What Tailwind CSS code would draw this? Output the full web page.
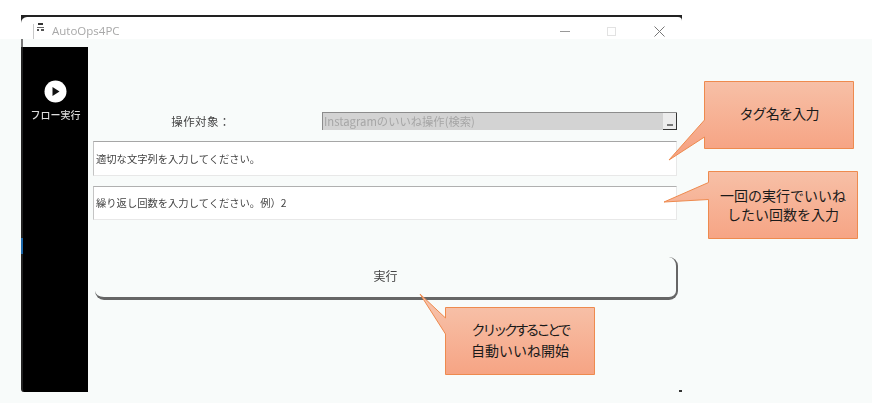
<!DOCTYPE html>
<html lang="ja">
<head>
  <meta charset="UTF-8" />
  <title>AutoOps4PC</title>
  <script src="https://cdn.jsdelivr.net/npm/@tailwindcss/browser@4"></script>
</head>
<body class="relative w-[872px] h-[403px] overflow-hidden bg-[#f8fbfa] font-['Noto_Sans_CJK_JP','Noto_Sans',sans-serif]">
  <!-- title bar band -->
  <div class="h-[39px] bg-white pt-[15px] pl-[21px]">
    <div class="w-[661px] h-[24px] bg-[#222] pt-[2px]">
      <div class="h-[22px] bg-white rounded-tl-[6px] rounded-tr-[4px] flex items-center pl-[12px] pt-[6px] text-[#a8a8a8] blur-[0.3px]">
        <div class="w-[1px] h-[15px] bg-[#c8c8c8]"></div>
        <svg width="8" height="13" viewBox="0 0 8 13" class="ml-[3px] -mt-[3px]">
          <rect x="1" y="0" width="5" height="2" fill="#333" />
          <rect x="0" y="4" width="7" height="1" fill="#666" />
          <rect x="0" y="6" width="2" height="2" fill="#555" />
          <rect x="4" y="6" width="3" height="2" fill="#555" />
        </svg>
        <span class="ml-[7px] text-[11.5px] leading-none font-['Open_Sans',sans-serif]">AutoOps4PC</span>
        <div class="ml-auto flex items-center pr-[17px]">
          <div class="w-[10px] h-[1px] bg-[#999]"></div>
          <div class="w-[9px] h-[9px] ml-[37px] border border-[#e2e2e2]"></div>
          <svg width="11" height="11" viewBox="0 0 11 11" class="ml-[38px]"><path d="M0.5 0.5L10.5 10.5M10.5 0.5L0.5 10.5" stroke="#777" stroke-width="1" fill="none" /></svg>
        </div>
      </div>
    </div>
  </div>

  <!-- window body -->
  <div class="ml-[21px] w-[661px] h-[353px] flex">
    <aside class="mt-[8px] w-[67px] h-[345px] bg-black border-l-[2px] border-[#222] rounded-bl-[3px] flex flex-col items-center pt-[33px] text-white">
      <svg width="23" height="23" viewBox="0 0 23 23">
        <circle cx="11.5" cy="11.5" r="11" fill="#fff" />
        <path d="M8.5 7L15.5 11.5L8.5 16Z" fill="#111" />
      </svg>
      <span class="mt-[5px] text-[10px] leading-[14px] font-medium text-[#ddd] whitespace-nowrap blur-[0.3px]">フロー実行</span>
    </aside>

    <main class="w-[594px] pl-[5px] pt-[73px] text-[#444] blur-[0.35px]">
      <div class="flex items-center h-[18px]">
        <span class="w-[216px] pt-[1px] text-center text-[11.5px] tracking-[0.4px]">操作対象：</span>
        <div class="ml-[13px] w-[355px] h-[18px] bg-[#d3d3d3] border-t border-l border-[#8c8c8c] flex items-center">
          <span class="pl-[1px] text-[11.3px] leading-none text-[#a6a6a6]">Instagramのいいね操作(検索)</span>
          <div class="ml-auto w-[14px] h-[17px] bg-[#ececec] border-r border-b border-[#333] flex items-end justify-center pb-[3px]">
            <div class="w-[6px] h-[2px] bg-[#777]"></div>
          </div>
        </div>
      </div>

      <div class="mt-[11px] w-[584px] h-[35px] bg-white border-t border-l border-t-[#a6a6a6] border-l-[#c4c4c4] border-r border-b border-r-[#e8e8e8] border-b-[#e8e8e8] flex items-center pl-[2px] text-[10.3px]">
        適切な文字列を入力してください。
      </div>
      <div class="mt-[10px] w-[584px] h-[34px] bg-white border-t border-l border-t-[#b0b0b0] border-l-[#c4c4c4] border-r border-b border-r-[#e8e8e8] border-b-[#e8e8e8] flex items-center pl-[2px] pb-[1px] text-[10.3px]">
        繰り返し回数を入力してください。例）2
      </div>

      <button class="mt-[37px] ml-[2px] w-[583px] h-[43px] rounded-[9px] border-b-[3px] border-r-[2px] border-[#666] flex items-center justify-center pb-[3px] text-[12px] text-[#444]">
        実行
      </button>
    </main>
  </div>

  <!-- small window corner and edge bits -->
  <div class="absolute left-[679px] top-[390px] w-[3px] h-[2px] bg-[#333]"></div>
  <div class="absolute left-[21px] top-[39px] w-[2px] h-[8px] bg-[#777]"></div>
  <div class="absolute left-[21px] top-[238px] w-[2px] h-[16px] bg-[#1a66a8]"></div>

  <!-- callouts -->
  <svg class="absolute left-0 top-0" width="872" height="403" viewBox="0 0 872 403">
    <defs>
      <linearGradient id="c1" gradientUnits="userSpaceOnUse" x1="0" y1="81" x2="0" y2="149"><stop offset="0" stop-color="#f7c0a7" /><stop offset="1" stop-color="#f6a484" /></linearGradient>
      <linearGradient id="c2" gradientUnits="userSpaceOnUse" x1="0" y1="171" x2="0" y2="239"><stop offset="0" stop-color="#f7c0a7" /><stop offset="1" stop-color="#f6a484" /></linearGradient>
      <linearGradient id="c3" gradientUnits="userSpaceOnUse" x1="0" y1="307" x2="0" y2="374"><stop offset="0" stop-color="#f7c0a7" /><stop offset="1" stop-color="#f6a484" /></linearGradient>
    </defs>
    <path d="M704.5 81.5H853.5V148.5H704.5V137L669 160L704.5 120Z" fill="url(#c1)" stroke="#ee8a4e" />
    <path d="M708.5 171.5H857.5V238.5H708.5V199.5L664 202L708.5 182.5Z" fill="url(#c2)" stroke="#ee8a4e" />
    <path d="M445.5 307.5H594.5V374.5H445.5V334L420 294L445.5 318Z" fill="url(#c3)" stroke="#ee8a4e" />
  </svg>
  <div class="absolute left-[704px] top-[79px] w-[150px] h-[68px] flex items-center justify-center text-[14px] tracking-[-0.8px] text-[#1a1a1a]">タグ名を入力</div>
  <div class="absolute left-[708px] top-[171px] w-[150px] h-[68px] flex items-center justify-center text-center text-[14px] leading-[19px] text-[#1a1a1a]">一回の実行でいいね<br />したい回数を入力</div>
  <div class="absolute left-[445px] top-[306px] w-[150px] h-[68px] flex flex-col items-center justify-center text-center text-[14px] leading-[21px] text-[#1a1a1a]">
    <span class="tracking-[-3.2px]">クリックすることで</span>
    <span>自動いいね開始</span>
  </div>
</body>
</html>
